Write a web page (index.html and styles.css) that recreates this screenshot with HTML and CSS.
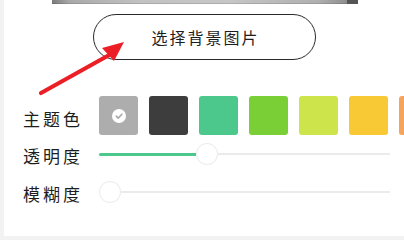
FILE: index.html
```html
<!DOCTYPE html>
<html lang="zh">
<head>
<meta charset="utf-8">
<link rel="stylesheet" href="styles.css">
</head>
<body>
<div class="panel">
  <div class="preview"><div class="preview-img"></div><div class="preview-end"></div></div>
  <button class="pick-btn">选择背景图片</button>
  <div class="row theme-row">
    <span class="label">主题色</span>
    <div class="swatches">
      <div class="swatch gray selected"><span class="check"><svg viewBox="0 0 14 14" width="14" height="14"><path d="M4.2 7.2 L6.2 9.1 L9.9 5.2" fill="none" stroke="#a9a9a9" stroke-width="1.6" stroke-linecap="round" stroke-linejoin="round"/></svg></span></div>
      <div class="swatch dark"></div>
      <div class="swatch green"></div>
      <div class="swatch lime"></div>
      <div class="swatch yellowgreen"></div>
      <div class="swatch yellow"></div>
      <div class="swatch orange"></div>
    </div>
  </div>
  <div class="row slider-row first">
    <span class="label">透明度</span>
    <div class="slider">
      <div class="fill" style="width:97px"></div>
      <div class="thumb"></div>
      <div class="rest"></div>
    </div>
  </div>
  <div class="row slider-row second">
    <span class="label">模糊度</span>
    <div class="slider">
      <div class="fill" style="width:0px"></div>
      <div class="thumb"></div>
      <div class="rest"></div>
    </div>
  </div>
</div>
<svg class="arrow" width="404" height="240" viewBox="0 0 404 240">
  <line x1="41" y1="93" x2="111" y2="54" stroke="#ec1f27" stroke-width="4.2" stroke-linecap="round"/>
  <polygon points="124,42 102,48 114,61" fill="#ec1f27"/>
</svg>
</body>
</html>
```
FILE: styles.css
```css
html, body {
  margin: 0;
  padding: 0;
}
body {
  width: 404px;
  height: 240px;
  background: #f2f2f2;
  overflow: hidden;
  position: relative;
  font-family: "Noto Sans CJK SC", "Noto Sans", sans-serif;
  color: #1e1e1e;
}
.panel {
  margin-left: 4px;
  height: 236px;
  background: #ffffff;
  display: flex;
  flex-direction: column;
  overflow: hidden;
}
.preview {
  margin-left: 48px;
  width: 306px;
  height: 4px;
  display: flex;
}
.preview-img {
  flex: 1;
  background: linear-gradient(90deg, #7c7c7c 0%, #a9a9a9 6%, #c2c2c2 30%, #c6c6c6 60%, #b0b0b0 90%, #8e8e8e 100%);
  box-shadow: inset 0 -1px 0 rgba(0,0,0,0.12);
}
.preview-end {
  width: 11px;
  background: #555555;
}
.pick-btn {
  margin-top: 10px;
  margin-left: 89px;
  width: 223px;
  height: 46px;
  border: 1px solid #2a2a2a;
  border-radius: 23px;
  background: #ffffff;
  font-family: "Noto Sans CJK SC", "Noto Sans", sans-serif;
  font-size: 16px;
  letter-spacing: 2px;
  text-indent: 2px;
  color: #1e1e1e;
  padding: 0;
  display: flex;
  align-items: center;
  justify-content: center;
}
.row {
  display: flex;
  align-items: center;
  padding-left: 19px;
}
.label {
  width: 76px;
  flex: none;
  font-size: 17px;
  letter-spacing: 3px;
  line-height: 20px;
  white-space: nowrap;
}
.theme-row {
  margin-top: 36px;
  height: 39px;
}
.theme-row .label {
  padding-top: 7px;
}
.swatches {
  display: flex;
  gap: 11px;
  flex-wrap: nowrap;
}
.swatch {
  width: 39px;
  height: 39px;
  flex: none;
  border-radius: 3px;
  display: flex;
  align-items: center;
  justify-content: center;
}
.gray { background: #adadad; }
.dark { background: #3d3d3d; }
.green { background: #4cc88c; }
.lime { background: #7bcf36; }
.yellowgreen { background: #cde54b; }
.yellow { background: #f8c934; }
.orange { background: #f6a35c; }
.check {
  width: 14px;
  height: 14px;
  border-radius: 50%;
  background: #ffffff;
  display: flex;
}
.slider-row {
  height: 24px;
}
.slider-row .label {
  padding-top: 3px;
}
.slider-row.first {
  margin-top: 7px;
}
.slider-row.second {
  margin-top: 14px;
}
.slider {
  width: 291px;
  height: 24px;
  display: flex;
  align-items: center;
}
.fill {
  height: 3px;
  background: #4cc88c;
  border-radius: 2px 0 0 2px;
  flex: none;
}
.thumb {
  width: 20px;
  height: 20px;
  flex: none;
  border-radius: 50%;
  background: #ffffff;
  border: 1px solid #ececec;
  box-shadow: 0 0 1px rgba(0,0,0,0.04);
}
.rest {
  flex: 1;
  height: 2px;
  background: #ebebeb;
}
.arrow {
  position: absolute;
  left: 0;
  top: 0;
  pointer-events: none;
}
```
